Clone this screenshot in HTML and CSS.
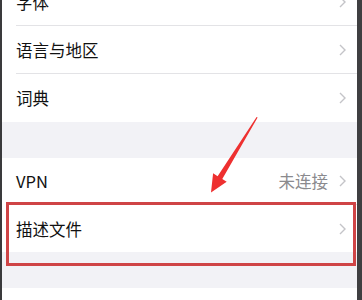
FILE: index.html
```html
<!DOCTYPE html>
<html lang="zh">
<head>
<meta charset="utf-8">
<link rel="stylesheet" href="styles.css">
</head>
<body>
<div class="frame">
  <div class="edge-left"></div>
  <div class="main">
    <div class="list">
      <div class="group">
        <div class="row"><div class="inner"><span class="label">字体</span><span class="right"><svg class="chev" viewBox="0 0 7 12"><path d="M1 1l5 5-5 5"/></svg></span></div></div>
        <div class="row"><div class="inner"><span class="label">语言与地区</span><span class="right"><svg class="chev" viewBox="0 0 7 12"><path d="M1 1l5 5-5 5"/></svg></span></div></div>
        <div class="row"><div class="inner last"><span class="label">词典</span><span class="right"><svg class="chev" viewBox="0 0 7 12"><path d="M1 1l5 5-5 5"/></svg></span></div></div>
      </div>
      <div class="gap"></div>
      <div class="group">
        <div class="row r2"><div class="inner"><span class="label">VPN</span><span class="right"><span class="value">未连接</span><svg class="chev" viewBox="0 0 7 12"><path d="M1 1l5 5-5 5"/></svg></span></div></div>
        <div class="row r2"><div class="inner last"><span class="label">描述文件</span><span class="right"><svg class="chev" viewBox="0 0 7 12"><path d="M1 1l5 5-5 5"/></svg></span></div></div>
      </div>
      <div class="gap"></div>
      <div class="group tail"></div>
    </div>
    <div class="highlight"></div>
    <svg class="arrow" viewBox="0 0 355 300" width="355" height="300">
      <polygon points="255.6,117.6 220.3,179 224.7,181.8 209,192.5 211.1,173.3 215.6,176.2 254.6,117"/>
    </svg>
  </div>
  <div class="edge-right"></div>
</div>
</body>
</html>
```

FILE: styles.css
```css
html, body {
  margin: 0;
  padding: 0;
  width: 362px;
  height: 300px;
  overflow: hidden;
  background: #ffffff;
}
.frame {
  display: flex;
  width: 362px;
  height: 300px;
}
.edge-left {
  width: 2px;
  background: #3a3a3c;
  flex: none;
}
.edge-right {
  width: 5px;
  background: #3f3f41;
  flex: none;
}
.main {
  position: relative;
  width: 355px;
  flex: none;
  overflow: hidden;
  background: #f2f2f6;
}
.list {
  margin-top: -22px;
  display: flex;
  flex-direction: column;
}
.group {
  background: #ffffff;
}
.row {
  height: 48px;
  font-family: "Noto Sans CJK SC", "Noto Sans", sans-serif;
  font-size: 16.5px;
  color: #111111;
}
.row.r2 {
  height: 47px;
}
.inner {
  margin-left: 14px;
  height: 100%;
  box-sizing: border-box;
  border-bottom: 1px solid #e3e3e6;
  display: flex;
  align-items: center;
  justify-content: space-between;
  padding-right: 11px;
}
.inner.last {
  border-bottom: none;
}
.right {
  display: flex;
  align-items: center;
  gap: 11px;
}
.value {
  color: #8a8a8e;
}
.chev {
  width: 7px;
  height: 12px;
  fill: none;
  stroke: #c4c4c8;
  stroke-width: 1.4;
}
.gap {
  height: 36px;
}
.tail {
  height: 40px;
}
.highlight {
  position: absolute;
  left: 4px;
  top: 202px;
  width: 350px;
  height: 64px;
  box-sizing: border-box;
  border: 3px solid #cf4446;
}
.arrow {
  position: absolute;
  left: 0;
  top: 0;
}
.arrow polygon {
  fill: #ee3030;
}
```
